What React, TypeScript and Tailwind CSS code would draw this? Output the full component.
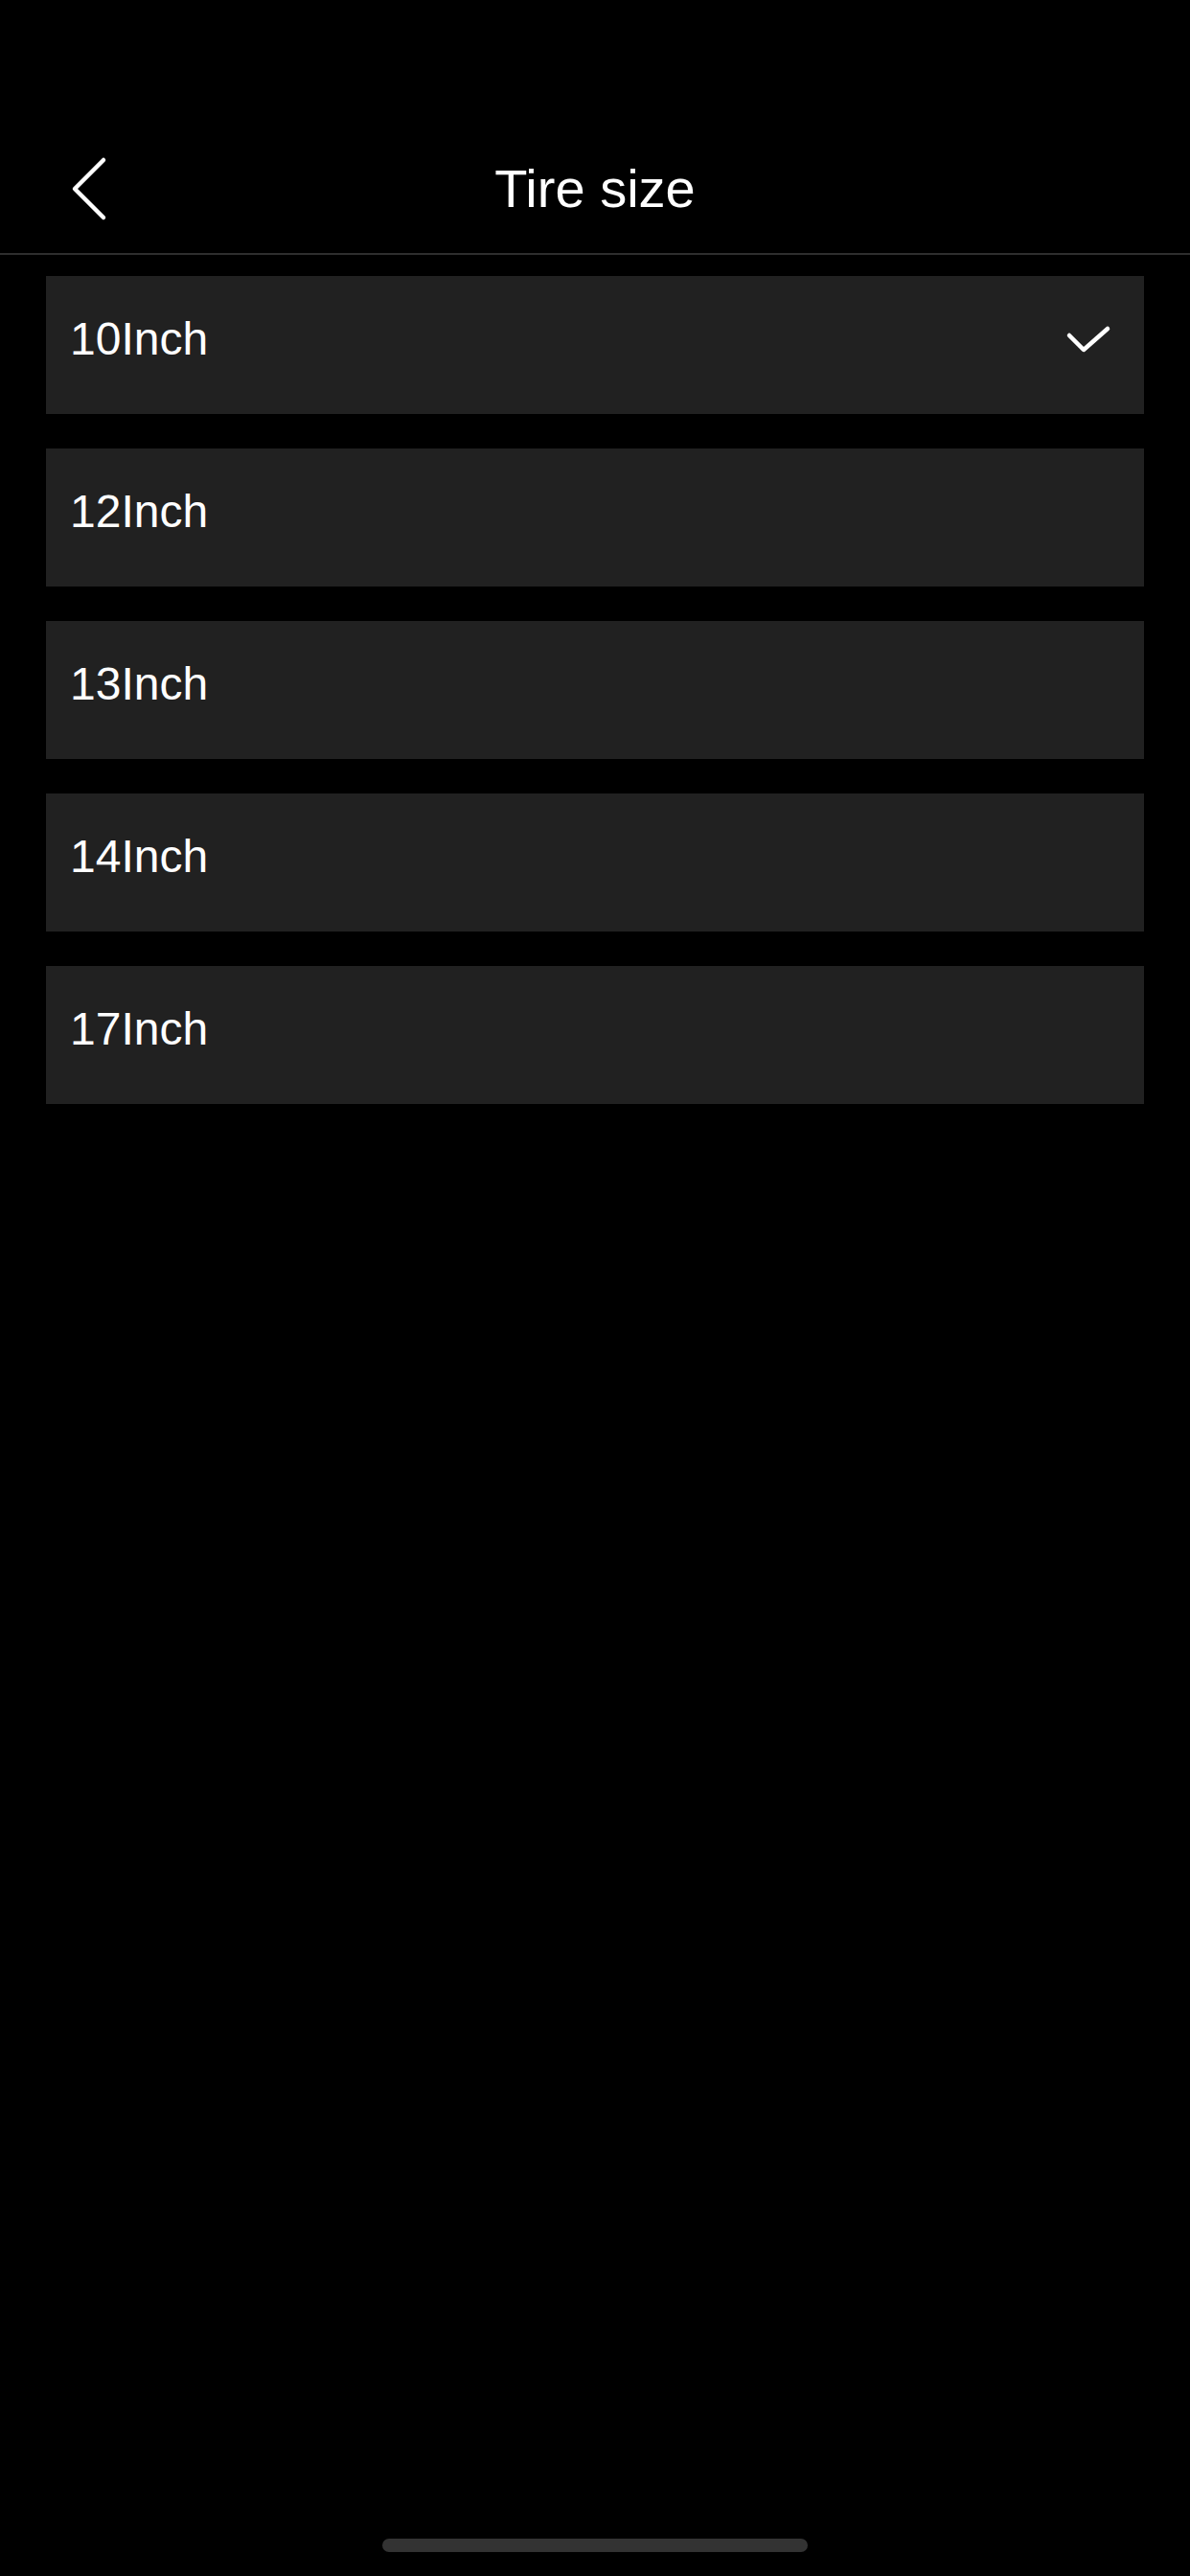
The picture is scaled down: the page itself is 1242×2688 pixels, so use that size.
const sizes = ["10Inch", "12Inch", "13Inch", "14Inch", "17Inch"];

function BackIcon() {
  return (
    <svg width="44" height="68" viewBox="0 0 44 68" fill="none">
      <path d="M38 4 L8 34 L38 64" stroke="white" strokeWidth="4.5" strokeLinecap="round" strokeLinejoin="round" />
    </svg>
  );
}

function CheckIcon() {
  return (
    <svg width="48" height="34" viewBox="0 0 48 34" fill="none">
      <path d="M4 13 L19 28 L44 6" stroke="white" strokeWidth="4.5" strokeLinecap="round" strokeLinejoin="round" />
    </svg>
  );
}

export default function App() {
  const selected = "10Inch";

  return (
    <div className="min-h-screen w-full bg-black text-white font-['Liberation_Sans',Arial,sans-serif] flex flex-col">
      {/* Status bar space */}
      <div className="h-[130px]" />

      {/* Header */}
      <div className="relative h-[134px] flex items-center justify-center">
        <button className="absolute left-[70px] top-1/2 -translate-y-1/2 flex items-center">
          <BackIcon />
        </button>
        <h1 className="text-[56px] leading-none">Tire size</h1>
      </div>
      <div className="h-[2px] bg-[#2e2e2e]" />

      {/* Options */}
      <div className="flex flex-col gap-[36px] px-[48px] pt-[22px]">
        {sizes.map((s) => (
          <div key={s} className="h-[144px] bg-[#212121] flex items-center justify-between pl-[25px] pr-[34px] pb-[12px]">
            <span className="text-[48px] leading-none">{s}</span>
            {s === selected && <CheckIcon />}
          </div>
        ))}
      </div>

      <div className="flex-1" />

      {/* Home indicator */}
      <div className="flex justify-center pb-[25px]">
        <div className="w-[444px] h-[14px] rounded-full bg-[#333333]" />
      </div>
    </div>
  );
}
